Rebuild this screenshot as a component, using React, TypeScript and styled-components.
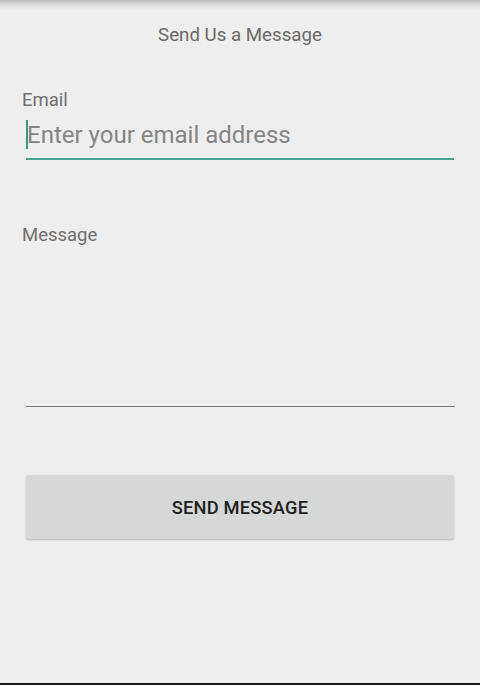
import { createGlobalStyle } from "styled-components";
import styled from "styled-components";

const GlobalStyle = createGlobalStyle`
  html, body {
    margin: 0;
    padding: 0;
    background: #eeeeee;
  }
  body {
    font-family: Roboto, "Liberation Sans", sans-serif;
  }
`;

function ContactForm() {
  return (
    <Screen>
      <TopShadow />
      <Title>Send Us a Message</Title>
      <Form>
        <Field>
          <Label>Email</Label>
          <InputRow $focused>
            <Caret />
            <Placeholder>Enter your email address</Placeholder>
          </InputRow>
        </Field>
        <Field $gap={64}>
          <Label>Message</Label>
          <MessageArea />
        </Field>
        <SendButton type="button">SEND MESSAGE</SendButton>
      </Form>
      <Spacer />
      <BottomEdge />
    </Screen>
  );
}

const Screen = styled.div({
  display: "flex",
  flexDirection: "column",
  width: "480px",
  height: "685px",
  background: "#eeeeee",
  overflow: "hidden",
});

const TopShadow = styled.div`
  height: 10px;
  flex-shrink: 0;
  background: linear-gradient(#b9b9b9, #d6d6d6 35%, #eeeeee);
`;

const Title = styled.div({
  textAlign: "center",
  fontSize: "18.7px",
  color: "#6a6a6a",
  lineHeight: "24px",
  marginTop: "13px",
});

const Form = styled.div({
  display: "flex",
  flexDirection: "column",
  padding: "0 26px 0 22px",
  marginTop: "42px",
});

const Field = styled.div<{ $gap?: number }>`
  display: flex;
  flex-direction: column;
  margin-top: ${(p) => p.$gap ?? 0}px;
`;

const Label = styled.div({
  fontSize: "18.5px",
  lineHeight: "22px",
  color: "#707070",
});

const InputRow = styled.div<{ $focused?: boolean }>`
  display: flex;
  align-items: center;
  height: 47px;
  margin-left: 4px;
  border-bottom: 2px solid ${(p) => (p.$focused ? "#4e9e90" : "#777777")};
`;

const Caret = styled.span`
  width: 2px;
  height: 29px;
  background: #3d9384;
  margin-right: -1px;
`;

const Placeholder = styled.span({
  fontSize: "24px",
  color: "#858585",
});

const MessageArea = styled.div({
  height: "160px",
  marginLeft: "4px",
  marginRight: "-1px",
  borderBottom: "1.5px solid #7a7a7a",
});

const SendButton = styled.button`
  margin: 68px 0 0 4px;
  height: 64px;
  border: none;
  border-radius: 2px;
  background: #d6d8d8;
  box-shadow: 0 1px 2px rgba(0, 0, 0, 0.22);
  font-family: Roboto, "Liberation Sans", sans-serif;
  font-size: 18.3px;
  font-weight: 500;
  color: #212121;
  letter-spacing: 0.2px;
`;

const Spacer = styled.div({
  flex: 1,
});

const BottomEdge = styled.div({
  height: "2px",
  background: "#1a1a1a",
  flexShrink: 0,
});

export default function App() {
  return (
    <>
      <GlobalStyle />
      <ContactForm />
    </>
  );
}
